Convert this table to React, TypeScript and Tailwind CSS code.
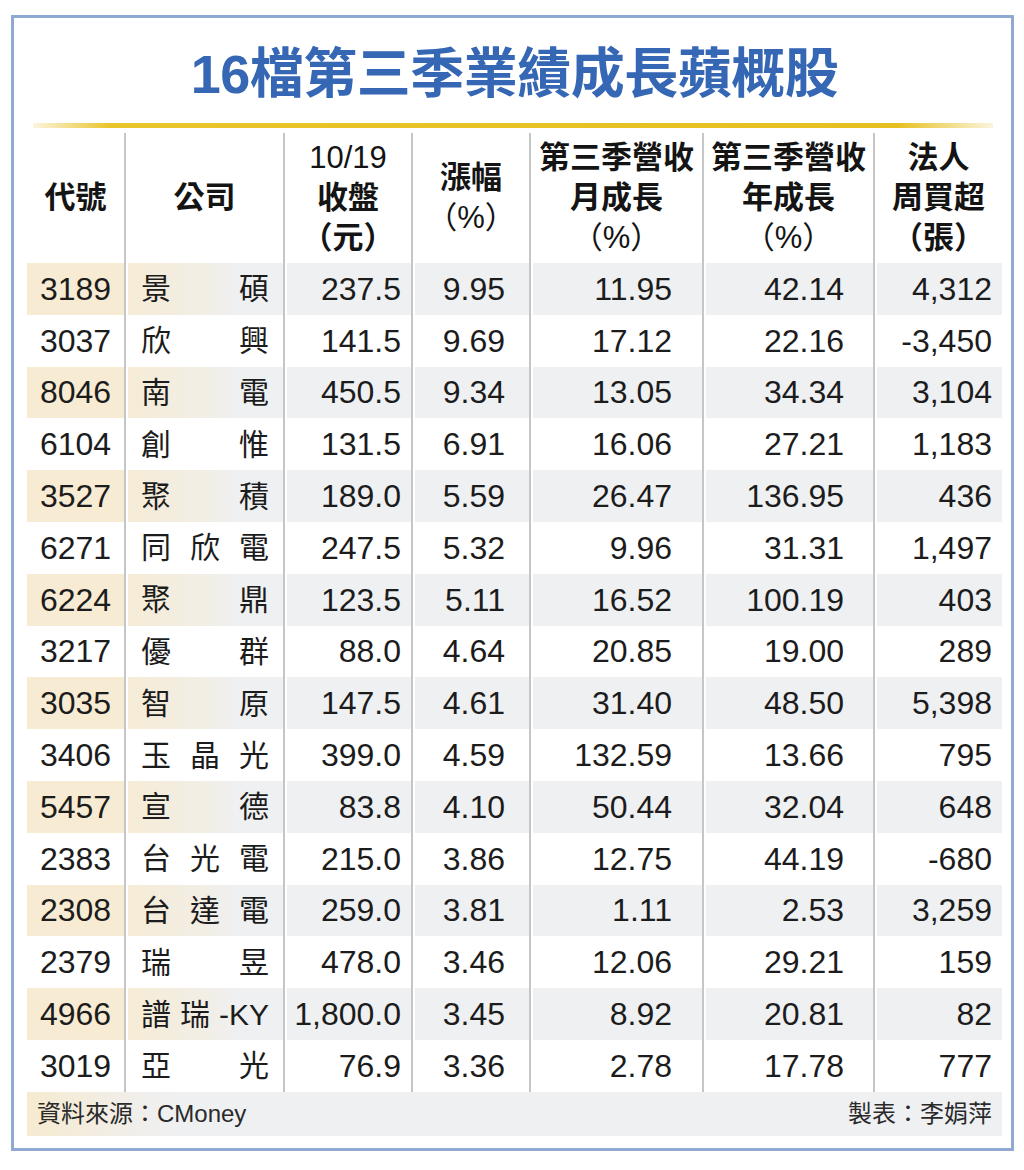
const ROWS: string[][] = [
  ['3189', '景碩', '237.5', '9.95', '11.95', '42.14', '4,312'],
  ['3037', '欣興', '141.5', '9.69', '17.12', '22.16', '-3,450'],
  ['8046', '南電', '450.5', '9.34', '13.05', '34.34', '3,104'],
  ['6104', '創惟', '131.5', '6.91', '16.06', '27.21', '1,183'],
  ['3527', '聚積', '189.0', '5.59', '26.47', '136.95', '436'],
  ['6271', '同欣電', '247.5', '5.32', '9.96', '31.31', '1,497'],
  ['6224', '聚鼎', '123.5', '5.11', '16.52', '100.19', '403'],
  ['3217', '優群', '88.0', '4.64', '20.85', '19.00', '289'],
  ['3035', '智原', '147.5', '4.61', '31.40', '48.50', '5,398'],
  ['3406', '玉晶光', '399.0', '4.59', '132.59', '13.66', '795'],
  ['5457', '宣德', '83.8', '4.10', '50.44', '32.04', '648'],
  ['2383', '台光電', '215.0', '3.86', '12.75', '44.19', '-680'],
  ['2308', '台達電', '259.0', '3.81', '1.11', '2.53', '3,259'],
  ['2379', '瑞昱', '478.0', '3.46', '12.06', '29.21', '159'],
  ['4966', '譜瑞-KY', '1,800.0', '3.45', '8.92', '20.81', '82'],
  ['3019', '亞光', '76.9', '3.36', '2.78', '17.78', '777'],
];

const FONT = "font-['Liberation_Sans','Noto_Sans_CJK_TC',sans-serif]";

// padding for the number columns (index 2..6)
const NUM_PAD = ['', '', 'pr-[10px]', 'pr-[24px]', 'pr-[30px]', 'pr-[29px]', 'pr-[10px]'];

function splitName(name: string) {
  if (name.includes('-')) {
    const i = name.indexOf('-');
    return [...name.slice(0, i).split(''), name.slice(i)];
  }
  return name.split('');
}

function Line({ children }: { children: React.ReactNode }) {
  return <div className="leading-[40px]">{children}</div>;
}

function HeaderCell({ first, children }: { first?: boolean; children: React.ReactNode }) {
  return (
    <div
      className={`h-[130px] flex flex-col items-center justify-center text-center text-[31px] font-bold text-[#141414] ${
        first ? '' : 'border-l-2 border-[#c6c6c6]'
      }`}
    >
      {children}
    </div>
  );
}

function Row({ row, shaded }: { row: string[]; shaded: boolean }) {
  const [code, name, ...nums] = row;
  const gray = shaded ? 'bg-[#eff0f2]' : '';
  return (
    <>
      <div className="h-[51.8px]">
        <div
          className={`h-full flex items-center justify-center text-[32px] ${
            shaded ? 'bg-[#f7ecd3]' : ''
          }`}
        >
          {code}
        </div>
      </div>
      <div className="h-[51.8px] border-l-2 border-[#c6c6c6] pl-[2px]">
        <div
          className={`h-full flex items-center justify-between pl-[13px] pr-[14px] text-[30px] ${
            shaded ? 'bg-[linear-gradient(90deg,#f6ecd6_0%,#f2eee6_50%,#eff0f2_70%)]' : ''
          }`}
        >
          {splitName(name).map((c, i) => (
            <span key={i}>{c}</span>
          ))}
        </div>
      </div>
      {nums.map((n, i) => (
        <div key={i} className="h-[51.8px] border-l-2 border-[#c6c6c6] pl-[2px]">
          <div className={`h-full flex items-center justify-end text-[32px] ${NUM_PAD[i + 2]} ${gray}`}>
            {n}
          </div>
        </div>
      ))}
    </>
  );
}

export default function App() {
  return (
    <div className={`w-[1024px] h-[1170px] bg-white pt-[15px] pl-[11px] text-[#1c1c1c] ${FONT}`}>
      <div className="w-[1003px] h-[1136px] border-[3px] border-[#8fa9d2] pl-[13px] pr-[9px]">
        <div className="h-[105px] flex items-center justify-center pt-[6px] text-[54px] font-bold leading-none text-[#3567b5] tracking-[-0.5px]">
          16檔第三季業績成長蘋概股
        </div>
        <div className="ml-[6px] w-[960px] h-[5px] bg-[linear-gradient(90deg,#fbf5df_0%,#e9c52c_8%,#e6c01f_90%,#fbf5df_100%)]" />
        <div className="h-[5px]" />

        <div className="grid grid-cols-[97px_159px_128px_118px_173px_171px_129px]">
          <HeaderCell first>
            <Line>代號</Line>
          </HeaderCell>
          <HeaderCell>
            <Line>公司</Line>
          </HeaderCell>
          <HeaderCell>
            <Line>
              <span className="font-normal">10/19</span>
            </Line>
            <Line>收盤</Line>
            <Line>（元）</Line>
          </HeaderCell>
          <HeaderCell>
            <Line>漲幅</Line>
            <Line>
              <span className="font-normal">（%）</span>
            </Line>
          </HeaderCell>
          <HeaderCell>
            <Line>第三季營收</Line>
            <Line>月成長</Line>
            <Line>
              <span className="font-normal">（%）</span>
            </Line>
          </HeaderCell>
          <HeaderCell>
            <Line>第三季營收</Line>
            <Line>年成長</Line>
            <Line>
              <span className="font-normal">（%）</span>
            </Line>
          </HeaderCell>
          <HeaderCell>
            <Line>法人</Line>
            <Line>周買超</Line>
            <Line>（張）</Line>
          </HeaderCell>
          {ROWS.map((r, i) => (
            <Row key={r[0]} row={r} shaded={i % 2 === 0} />
          ))}
        </div>

        <div className="h-[44px] flex items-center justify-between px-[10px] text-[24px] text-[#2a2a2a] bg-[linear-gradient(90deg,#f6ebd0_0%,#f1eee8_10%,#eff0f2_15%,#eff0f2_100%)]">
          <span>資料來源：CMoney</span>
          <span>製表：李娟萍</span>
        </div>
      </div>
    </div>
  );
}
